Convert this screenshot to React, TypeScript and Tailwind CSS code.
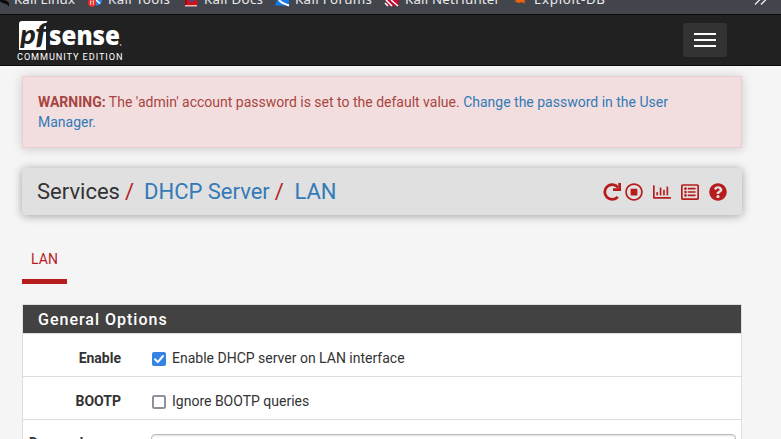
import React from "react";
import { FaRegStopCircle, FaRegChartBar, FaRegListAlt, FaQuestionCircle } from "react-icons/fa";

function Bookmark({ className, icon, label, width }: { className: string; icon: React.ReactNode; label: string; width: number }) {
  return (
    <div className={`flex shrink-0 items-start ${className}`}>
      <svg className="mr-[5px] h-[14px] w-[16px] shrink-0" viewBox="0 0 16 14">{icon}</svg>
      <svg className="h-[14px] shrink-0 overflow-visible" width={width} height="14">
        <text x="0" y="4" fontSize="13.33" textLength={width} fill="#e9e9ec" fontFamily="Noto Sans, sans-serif">{label}</text>
      </svg>
    </div>
  );
}

function BookmarksBar() {
  return (
    <div className="flex h-[14px] overflow-hidden bg-[#43454d]">
      <Bookmark className="ml-[-7px]" label="Kali Linux" width={61} icon={<path d="M6 0h4q4 0 6 3v4q-1-3-5-3.500L7 1.500z" fill="#0b0b0d" />} />
      <Bookmark
        className="ml-[12px]" label="Kali Tools" width={62}
        icon={<><path d="M7 0h8q0 5-6 5.500z" fill="#2685ef" /><path d="M9 0l4 3.500" stroke="#fff" strokeWidth="1.500" /><circle cx="5" cy="2.700" r="4.200" fill="#e72c25" /><path d="M3.700 1v4M6.300 1v4M3 1h1.400M5.600 1h1.400" stroke="#fff" strokeWidth=".8" /></>}
      />
      <Bookmark className="ml-[13px]" label="Kali Docs" width={59} icon={<><path d="M2 0h12v6H2z" fill="#cf1118" /><path d="M2 5h12v1.500H2z" fill="#efb8b5" /><path d="M3 0v5" stroke="#620b10" /><path d="M7 1l4-1" stroke="#2b4daa" strokeWidth="2" /></>} />
      <Bookmark className="ml-[11px]" label="Kali Forums" width={77} icon={<><path d="M3 0h12v5.500H1z" fill="#1479e8" /><path d="M5 0q2 3 10 5.500" stroke="#fff" strokeWidth="2.200" fill="none" /></>} />
      <Bookmark className="ml-[12px]" label="Kali NetHunter" width={95} icon={<><path d="M1 0h14l-1 6H5z" fill="#c5082e" /><path d="M2 0l6 6M7 0l7 6M1 3l3 3" stroke="#fff" strokeWidth="1.500" /></>} />
      <Bookmark className="ml-[13px]" label="Exploit-DB" width={71} icon={<path d="M1 1l3-1h7l3 2-3-1 1 3-3-2-3 1z" fill="#f2640d" />} />
      <svg className="mt-[-5px] ml-[149px] h-[10px] w-[14px] shrink-0" viewBox="0 0 14 10" fill="none" stroke="#eeeef0" strokeWidth="1.300">
        <path d="M1 0l5 4.500L1 9.500M7 0l5 4.500L7 9.500" />
      </svg>
    </div>
  );
}

function Logo() {
  return (
    <svg className="h-[48px] w-[112px]" viewBox="0 0 112 48">
      <path d="M5 6h25.500q-1 1-1.500 3v26H2V9q0-3 3-3z" fill="#fff" />
      <text x="3.300" y="29" fontFamily="Lato, sans-serif" fontStyle="italic" fontWeight="900" fontSize="27" textLength="15.500" lengthAdjust="spacingAndGlyphs" fill="#212121">p</text>
      <text x="18" y="29" fontFamily="Lato, sans-serif" fontStyle="italic" fontWeight="900" fontSize="28" textLength="12" lengthAdjust="spacingAndGlyphs" fill="#212121">f</text>
      <text x="32" y="29.500" fontFamily="Open Sans, sans-serif" fontWeight="800" fontSize="26" textLength="71" lengthAdjust="spacingAndGlyphs" fill="#fff">sense</text>
      <circle cx="103.600" cy="30" r="1" fill="#999" />
      <text x="0" y="45" fontFamily="Roboto, sans-serif" fontSize="9.200" textLength="105.500" fill="#fff">COMMUNITY EDITION</text>
    </svg>
  );
}

function RepeatIcon() {
  return (
    <svg className="h-[18px] w-[18px]" viewBox="0 0 18 18">
      <path d="M14.800 13.800A7.400 7.400 0 1 1 15 4.500" fill="none" stroke="#b71c1c" strokeWidth="2.800" />
      <path d="M15.300 0h2.700v8h-8v-2.700h5.300z" fill="#b71c1c" />
    </svg>
  );
}

function CheckRow({ label, text, checked }: { label: string; text: string; checked?: boolean }) {
  return (
    <div className="flex h-[43px] items-start border-b border-[#dedede] pt-[14px] leading-5">
      <div className="w-[98px] text-right font-bold">{label}</div>
      <svg className="mt-[4px] ml-[31px] h-[14px] w-[14px]" viewBox="0 0 14 14">
        {checked ? (
          <><rect width="14" height="14" rx="2" fill="#3584e4" /><path d="M3 7.300l2.800 2.800L11 4" stroke="#fff" strokeWidth="2" fill="none" strokeLinecap="round" strokeLinejoin="round" /></>
        ) : (
          <rect x="1" y="1" width="12" height="12" rx="1.500" fill="#fff" stroke="#8f8f9d" strokeWidth="2" />
        )}
      </svg>
      <span className="ml-[6px]">{text}</span>
    </div>
  );
}

export default function App() {
  return (
    <div className="h-[439px] w-[781px] overflow-hidden bg-[#f5f5f5] font-[Roboto,sans-serif] text-[14px] text-[#333]">
      <BookmarksBar />
      <header className="flex h-[52px] items-start justify-between border-y border-[#0b0b0d] bg-[#212121] pr-[54px] pl-[17px]">
        <Logo />
        <button className="mt-[8px] flex h-[34px] w-[44px] flex-col items-center justify-center gap-[4px] rounded-[3px] bg-[#333]">
          <span className="h-[2px] w-[22px] bg-white" />
          <span className="h-[2px] w-[22px] bg-white" />
          <span className="h-[2px] w-[22px] bg-white" />
        </button>
      </header>
      <main className="ml-[22px] w-[720px] pt-[10px]">
        <div className="h-[72px] border border-[#ebccd1] bg-[#f2dede] px-[15px] pt-[15px] leading-5 text-[#a94442] shadow-[0_1px_10px_rgba(0,0,0,0.18)]">
          <b>WARNING:</b> The 'admin' account password is set to the default value. <a className="text-[#337ab7]">Change the password in the User<br />Manager.</a>
        </div>
        <div className="mt-[20px] flex h-[47px] items-center justify-between rounded-[4px] bg-[#e0e0e0] pr-[15px] pl-[15px] shadow-[0_1px_10px_rgba(0,0,0,0.35)]">
          <div className="flex text-[22px] leading-[24px]">
            <span>Services</span>
            <span className="ml-[5px] text-[#b71c1c]">/</span>
            <a className="ml-[10px] text-[#337ab7]">DHCP Server</a>
            <span className="ml-[5px] text-[#b71c1c]">/</span>
            <a className="ml-[10.5px] text-[#337ab7]">LAN</a>
          </div>
          <div className="flex items-center text-[18px] text-[#b71c1c]">
            <RepeatIcon />
            <FaRegStopCircle className="ml-[4px]" />
            <FaRegChartBar className="ml-[10px]" />
            <FaRegListAlt className="ml-[10px]" />
            <FaQuestionCircle className="ml-[10px]" />
          </div>
        </div>
        <div className="mt-[24px] flex h-[45px] w-[45px] justify-center border-b-[5px] border-[#b71c1c] pt-[10px] leading-5 text-[#b71c1c]">LAN</div>
        <section className="mt-[20px] h-[160px] border border-[#dedede] bg-white">
          <h2 className="h-[29px] border-b border-[#dedede] bg-[#424242] pl-[15px] text-[16px] leading-[29px] font-medium tracking-[1px] text-white">General Options</h2>
          <CheckRow label="Enable" text="Enable DHCP server on LAN interface" checked />
          <CheckRow label="BOOTP" text="Ignore BOOTP queries" />
          <div className="flex">
            <div className="w-[98px] pt-[13px] text-right leading-5 font-bold whitespace-nowrap">Deny unknown</div>
            <div className="mt-[14px] ml-[30px] h-[34px] w-[585px] rounded-[4px] border border-[#bbb] bg-white shadow-[inset_0_1px_2px_rgba(0,0,0,0.12)]" />
          </div>
        </section>
      </main>
    </div>
  );
}
